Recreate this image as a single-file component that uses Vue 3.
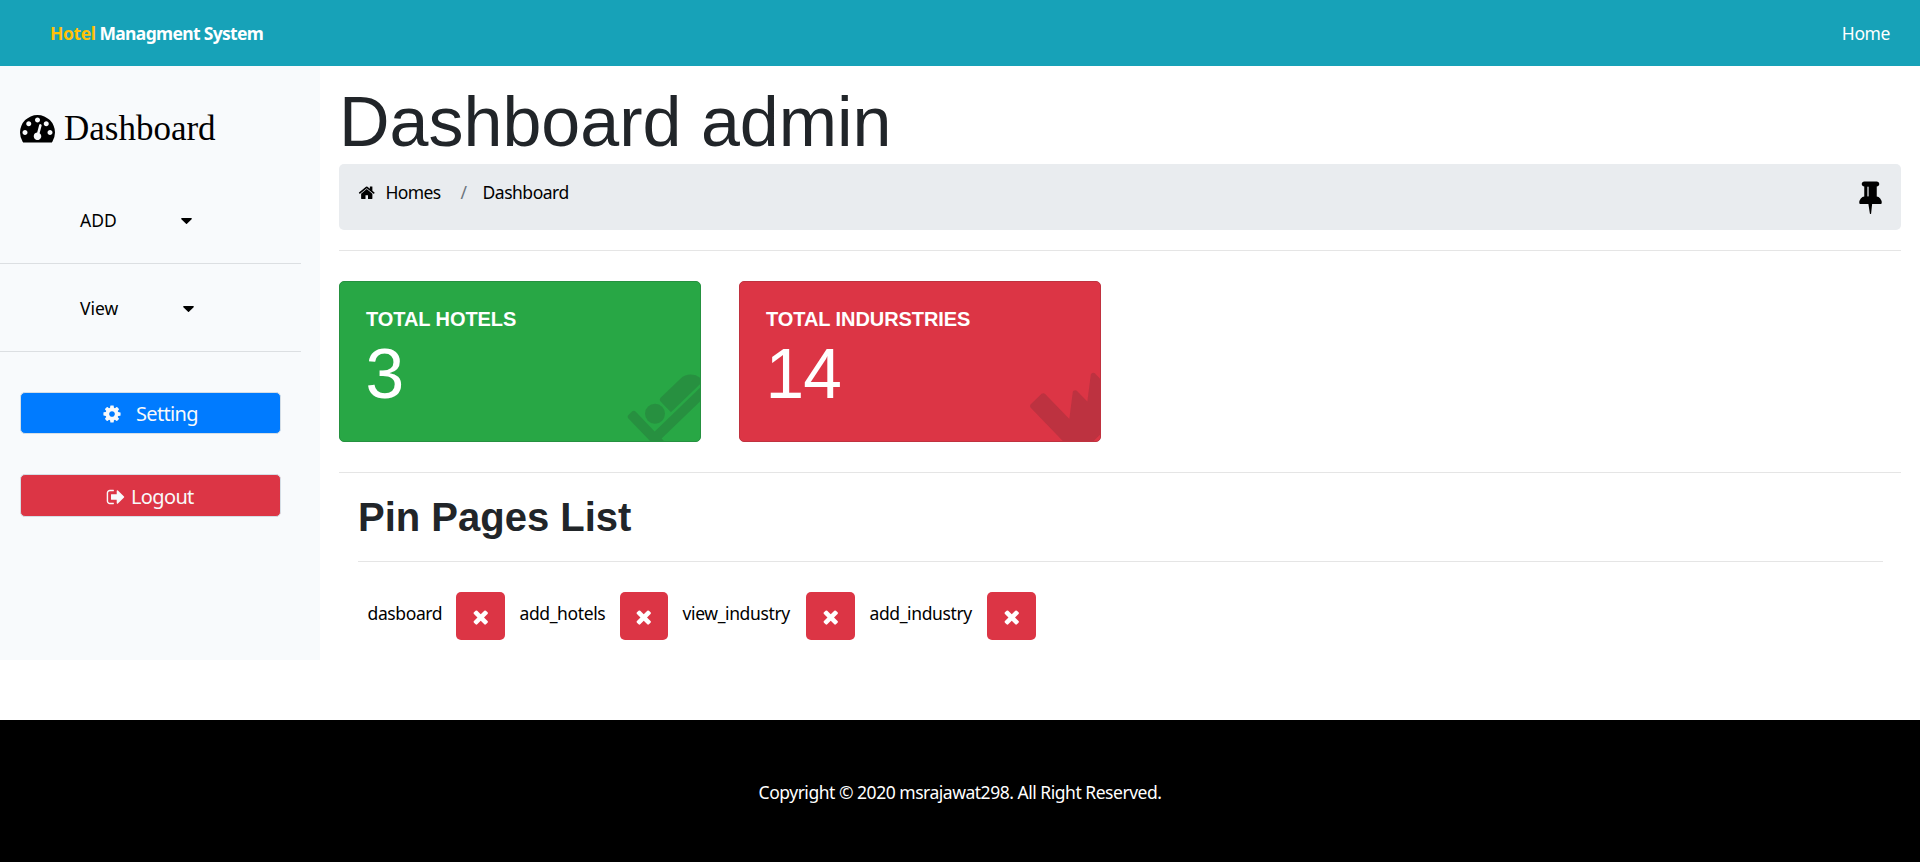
<script setup>
const icons = {
  gauge: 'M384 1152q0-53-37.5-90.5t-90.5-37.5-90.5 37.5-37.5 90.5 37.5 90.5 90.5 37.5 90.5-37.5 37.5-90.5zm192-448q0-53-37.5-90.5t-90.5-37.5-90.5 37.5-37.5 90.5 37.5 90.5 90.5 37.5 90.5-37.5 37.5-90.5zm428 481l101-382q6-26-7.5-48.5t-38.5-29.5-48 6.5-30 39.5l-101 382q-60 5-107 43.5t-63 98.5q-20 77 20 146t117 89 146-20 89-117q16-60-6-117t-72-91zm660-33q0-53-37.5-90.5t-90.5-37.5-90.5 37.5-37.5 90.5 37.5 90.5 90.5 37.5 90.5-37.5 37.5-90.5zm-640-640q0-53-37.5-90.5t-90.5-37.5-90.5 37.5-37.5 90.5 37.5 90.5 90.5 37.5 90.5-37.5 37.5-90.5zm448 192q0-53-37.5-90.5t-90.5-37.5-90.5 37.5-37.5 90.5 37.5 90.5 90.5 37.5 90.5-37.5 37.5-90.5zm320 448q0 261-141 483-19 29-54 29h-1402q-35 0-54-29-141-221-141-483 0-182 71-348t191-286 286-191 348-71 348 71 286 191 191 286 71 348z',
  home: 'M1472 992v480q0 26-19 45t-45 19h-384v-384h-256v384h-384q-26 0-45-19t-19-45v-480q0-1 .5-3t.5-3l575-474 575 474q1 2 1 6zm223-69l-62 74q-8 9-21 11h-3q-13 0-21-7l-692-577-692 577q-12 8-24 7-13-2-21-11l-62-74q-8-10-7-23.5t11-21.5l719-599q32-26 76-26t76 26l244 204v-195q0-14 9-23t23-9h192q14 0 23 9t9 23v408l219 182q10 8 11 21.5t-7 23.5z',
  cog: 'M1152 896q0-106-75-181t-181-75-181 75-75 181 75 181 181 75 181-75 75-181zm512-109v222q0 12-8 23t-20 13l-185 28q-19 54-39 91 35 50 107 138 10 12 10 25t-9 23q-27 37-99 108t-94 71q-12 0-26-9l-138-108q-44 23-91 38-16 136-29 186-7 28-36 28h-222q-14 0-24.5-8.5t-11.5-21.5l-28-184q-49-16-90-37l-141 107q-10 9-25 9-14 0-25-11-126-114-165-168-7-10-7-23 0-12 8-23 15-21 51-66.5t54-70.5q-27-50-41-99l-183-27q-13-2-21-12.5t-8-23.5v-222q0-12 8-23t19-13l186-28q14-46 39-92-40-57-107-138-10-12-10-24 0-10 9-23 26-36 98.5-107.5t94.5-71.5q13 0 26 10l138 107q44-23 91-38 16-136 29-186 7-28 36-28h222q14 0 24.5 8.5t11.5 21.5l28 184q49 16 90 37l142-107q9-9 24-9 13 0 25 10 129 119 165 170 7 8 7 22 0 12-8 23-15 21-51 66.5t-54 70.5q26 50 41 98l183 28q13 2 21 12.5t8 23.5z',
  signOut: 'M704 1440q0 4 1 20t.5 26.5-3 23.5-10 19.5-20.5 6.5h-320q-119 0-203.5-84.5t-84.5-203.5v-704q0-119 84.5-203.5t203.5-84.5h320q13 0 22.5 9.5t9.5 22.5q0 4 1 20t.5 26.5-3 23.5-10 19.5-20.5 6.5h-320q-66 0-113 47t-47 113v704q0 66 47 113t113 47h312l11.5 1 11.5 3 8 5.5 7 9 2 13.5zm928-544q0 26-19 45l-544 544q-19 19-45 19t-45-19-19-45v-288h-448q-26 0-45-19t-19-45v-384q0-26 19-45t45-19h448v-288q0-26 19-45t45-19 45 19l544 544q19 19 19 45z',
  times: 'M1490 1322q0 40-28 68l-136 136q-28 28-68 28t-68-28l-294-294-294 294q-28 28-68 28t-68-28l-136-136q-28-28-28-68t28-68l294-294-294-294q-28-28-28-68t28-68l136-136q28-28 68-28t68 28l294 294 294-294q28-28 68-28t68 28l136 136q28 28 28 68t-28 68l-294 294 294 294q28 28 28 68z',
  tack: 'M800 864v-448q0-14-9-23t-23-9-23 9-9 23v448q0 14 9 23t23 9 23-9 9-23zm672 352q0 26-19 45t-45 19h-429l-51 483q-2 12-10.5 20.5t-20.5 8.5h-1q-27 0-32-27l-76-485h-404q-26 0-45-19t-19-45q0-123 78.5-221.5t177.5-98.5v-512q-52 0-90-38t-38-90 38-90 90-38h640q52 0 90 38t38 90-38 90-90 38v512q99 0 177.5 98.5t78.5 221.5z',
  caret: 'M1408 704q0 26-19 45l-448 448q-19 19-45 19t-45-19l-448-448q-19-19-19-45t19-45 45-19h896q26 0 45 19t19 45z',
  bed: 'M256 1024h1728q26 0 45 19t19 45v448h-256v-256h-1536v256h-256v-1216q0-26 19-45t45-19h128q26 0 45 19t19 45v704zm576-320q0-106-75-181t-181-75-181 75-75 181 75 181 181 75 181-75 75-181zm1216 256v-64q0-159-112.5-271.5t-271.5-112.5h-704q-26 0-45 19t-19 45v384h1152z',
  industry: 'M448 0q26 0 45 19t19 45v891l536-429q17-14 40-14 26 0 45 19t19 45v379l536-429q17-14 40-14 26 0 45 19t19 45v1152q0 26-19 45t-45 19h-1664q-26 0-45-19t-19-45v-1664q0-26 19-45t45-19h384z',
}
const menus = [{ label: 'ADD', kind: 'add' }, { label: 'View', kind: 'view' }]
const cards = [
  { title: 'TOTAL HOTELS', value: 3, tone: 'green', icon: icons.bed, place: 'translate(316 132.7) rotate(-44) scale(.0391) translate(-576 -704)' },
  { title: 'TOTAL INDURSTRIES', value: 14, tone: 'red', icon: icons.industry, place: 'translate(290 125) rotate(-44) scale(.0391)' },
]
const pins = [
  { name: 'dasboard', width: 73.5, button: 49 },
  { name: 'add_hotels', width: 85.5, button: 48 },
  { name: 'view_industry', width: 108.5, button: 49 },
  { name: 'add_industry', width: 102.5, button: 49 },
]
</script>

<template>
  <div class="page">
    <nav class="topbar">
      <a class="brand"><span class="gold">Hotel</span> Managment System</a>
      <a class="home-link">Home</a>
    </nav>
    <div class="columns">
      <aside class="sidebar">
        <div class="side-title">
          <svg viewBox="0 0 1792 1792"><path :d="icons.gauge" /></svg>
          <span>Dashboard</span>
        </div>
        <div v-for="m in menus" :key="m.kind" class="menu" :class="m.kind">
          <span>{{ m.label }}</span>
          <svg viewBox="384 640 1024 576"><path :d="icons.caret" /></svg>
        </div>
        <button class="side-btn setting">
          <svg viewBox="0 0 1792 1792"><path :d="icons.cog" /></svg><span>Setting</span>
        </button>
        <button class="side-btn logout">
          <svg viewBox="0 0 1792 1792"><path :d="icons.signOut" /></svg><span>Logout</span>
        </button>
      </aside>
      <main class="main">
        <h1>Dashboard admin</h1>
        <div class="crumbs">
          <svg class="house" viewBox="0 0 1792 1792"><path :d="icons.home" /></svg>
          <span class="homes">Homes</span>
          <span class="slash">/</span>
          <span class="current">Dashboard</span>
          <svg class="tack" viewBox="0 0 1792 1792"><path :d="icons.tack" /></svg>
        </div>
        <section class="cards">
          <article v-for="c in cards" :key="c.title" class="card" :class="c.tone">
            <h5>{{ c.title }}</h5>
            <div class="value">{{ c.value }}</div>
            <svg class="mark" viewBox="0 0 362 161"><path :d="c.icon" :transform="c.place" /></svg>
          </article>
        </section>
        <section class="pinned">
          <h2>Pin Pages List</h2>
          <div class="pins">
            <template v-for="p in pins" :key="p.name">
              <span class="pin-name" :style="{ width: p.width + 'px' }">{{ p.name }}</span>
              <button class="remove" :style="{ width: p.button + 'px' }"><svg viewBox="0 0 1792 1792"><path :d="icons.times" /></svg></button>
            </template>
          </div>
        </section>
      </main>
    </div>
    <footer class="footer"><span>Copyright © 2020 msrajawat298. All Right Reserved.</span></footer>
  </div>
</template>

<style>
body { margin: 0; background: #fff; overflow: hidden; }
</style>

<style scoped>
* { box-sizing: border-box; }
.page {
  height: 862px;
  display: flex;
  flex-direction: column;
  font-family: "Noto Sans", sans-serif;
  font-size: 17.5px;
  line-height: 26px;
  letter-spacing: -0.48px;
  color: #000;
  white-space: nowrap;
}
svg { display: block; flex: none; fill: currentColor; }
h1, h2, h5 { margin: 0; font-family: "Liberation Sans", Arial, sans-serif; letter-spacing: 0; }
button { font: inherit; letter-spacing: inherit; border: 0; padding: 0; }
.topbar {
  height: 66px;
  flex: none;
  display: flex;
  align-items: center;
  justify-content: space-between;
  padding: 0 30px 0 50px;
  background: #17a2b8;
  color: #fff;
}
.brand { font-weight: 700; letter-spacing: -0.67px; }
.home-link { letter-spacing: -0.4px; }
.gold { color: #ffc107; letter-spacing: -0.4px; }
.columns { height: 594px; flex: none; display: flex; }
.sidebar { width: 320px; flex: none; background: #f8fafc; }
.side-title {
  height: 109px;
  display: flex;
  gap: 9px;
  padding: 42px 0 0 20px;
  font: 35px/42px "Liberation Serif", "Times New Roman", serif;
  letter-spacing: 0;
}
.side-title svg { width: 35px; height: 35px; margin-top: 2px; }
.menu {
  width: 301px;
  height: 88px;
  display: flex;
  align-items: center;
  padding-left: 80px;
  border-bottom: 1px solid #dcdfe2;
  letter-spacing: 0;
}
.menu.add { height: 89px; padding-top: 2px; }
.menu span { width: 101px; }
.menu.view span { width: 103px; }
.menu svg { width: 11px; height: 6px; margin-top: 2px; }
.side-btn {
  width: 261px;
  height: 42px;
  display: flex;
  align-items: center;
  margin: 40px 0 0 20px;
  border: 1px solid #d5dee6;
  border-radius: 5px;
  color: #f8f9fa;
  font-size: 20px;
  letter-spacing: -0.65px;
}
.side-btn svg { width: 20px; height: 20px; }
.setting { background: #007bff; padding: 1px 0 0 81px; }
.setting span { margin-left: 14px; }
.logout { height: 43px; background: #dc3545; padding: 2px 0 0 85px; }
.logout span { margin-left: 5px; }
.main { flex: 1; padding: 14px 19px 0; }
h1 { height: 84px; font-size: 70px; font-weight: 400; line-height: 84px; color: #212529; }
.crumbs {
  height: 66px;
  display: flex;
  padding: 14px 13.5px 0 19px;
  border-radius: 5px;
  background: #e9ecef;
  line-height: 28px;
}
.house { width: 17.5px; height: 17.5px; margin-top: 6px; }
.homes { width: 75px; margin-left: 10px; letter-spacing: -0.65px; }
.slash { width: 22px; color: #6c757d; }
.current { flex: 1; }
.tack { width: 35px; height: 35px; margin-top: 1px; }
.cards {
  height: 223px;
  display: flex;
  gap: 38px;
  margin-top: 20px;
  padding-top: 30px;
  border-top: 1px solid #e5e5e5;
  border-bottom: 1px solid #e5e5e5;
}
.card {
  position: relative;
  width: 362px;
  height: 161px;
  padding: 25px 26px;
  overflow: hidden;
  border: 1px solid;
  border-radius: 5px;
  color: #fff;
}
.green { background: #28a745; border-color: #259140; }
.red { background: #dc3545; border-color: #c0323f; }
.card h5 { font-size: 20px; line-height: 24px; letter-spacing: -0.07px; }
.value { margin: 8px 0 0 -0.5px; font: 69.5px/70px "Liberation Sans", Arial, sans-serif; letter-spacing: -0.8px; }
.mark { position: absolute; left: -1px; top: -1px; width: 362px; height: 161px; color: rgba(33, 37, 41, 0.17); }
.pinned { padding: 0 18px 0 19px; }
h2 { height: 89px; padding-top: 20px; border-bottom: 1px solid #e5e5e5; font-size: 40px; line-height: 48px; color: #212529; }
.pins { display: flex; align-items: center; padding: 30px 0 0 9.5px; }
.pin-name { margin: -7px 15px 0 0; letter-spacing: -0.38px; }
.remove {
  height: 48px;
  display: flex;
  align-items: center;
  justify-content: center;
  margin-right: 14.5px;
  padding-top: 2px;
  border-radius: 5px;
  background: #dc3545;
  color: #fff;
}
.remove svg { width: 21.5px; height: 21.5px; }
.footer {
  height: 142px;
  flex: none;
  display: flex;
  justify-content: center;
  margin-top: 60px;
  padding-top: 59px;
  background: #000;
  color: #fff;
}
</style>
